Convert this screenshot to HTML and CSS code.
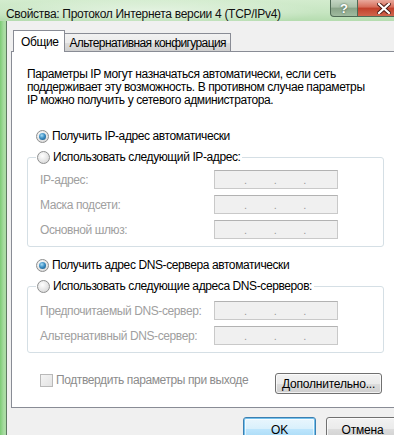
FILE: index.html
```html
<!DOCTYPE html>
<html lang="ru">
<head>
  <meta charset="UTF-8">
  <title>Свойства: Протокол Интернета версии 4 (TCP/IPv4)</title>
  <link rel="stylesheet" href="styles.css">
</head>
<body>
  <div class="window">
    <div class="titlebar">
      <span class="title">Свойства: Протокол Интернета версии 4 (TCP/IPv4)</span>
      <div class="caption-btns">
        <button class="cap-btn help">?</button>
        <button class="cap-btn close">
          <svg width="14" height="11" viewBox="0 0 14 11">
            <path d="M2 1 L12 10 M12 1 L2 10" stroke="#4a1a14" stroke-width="4" stroke-linecap="square"/>
            <path d="M2 1 L12 10 M12 1 L2 10" stroke="#ffffff" stroke-width="2.2" stroke-linecap="square"/>
          </svg>
        </button>
      </div>
    </div>

    <div class="frame">
      <div class="client">
        <div class="tabs">
          <div class="tab active">Общие</div>
          <div class="tab">Альтернативная конфигурация</div>
        </div>

        <div class="panel">
          <p class="intro">Параметры IP могут назначаться автоматически, если сеть<br>
            поддерживает эту возможность. В противном случае параметры<br>
            IP можно получить у сетевого администратора.</p>

          <label class="radio-row first">
            <span class="radio checked"></span>
            <span>Получить IP-адрес автоматически</span>
          </label>

          <fieldset class="group">
            <legend class="radio-row">
              <span class="radio"></span>
              <span>Использовать следующий IP-адрес:</span>
            </legend>
            <div class="field">
              <span class="field-label">IP-адрес:</span>
              <span class="ip-box"><i>.</i><i>.</i><i>.</i></span>
            </div>
            <div class="field">
              <span class="field-label">Маска подсети:</span>
              <span class="ip-box"><i>.</i><i>.</i><i>.</i></span>
            </div>
            <div class="field">
              <span class="field-label">Основной шлюз:</span>
              <span class="ip-box"><i>.</i><i>.</i><i>.</i></span>
            </div>
          </fieldset>

          <label class="radio-row second">
            <span class="radio checked"></span>
            <span>Получить адрес DNS-сервера автоматически</span>
          </label>

          <fieldset class="group dns">
            <legend class="radio-row">
              <span class="radio"></span>
              <span>Использовать следующие адреса DNS-серверов:</span>
            </legend>
            <div class="field">
              <span class="field-label">Предпочитаемый DNS-сервер:</span>
              <span class="ip-box"><i>.</i><i>.</i><i>.</i></span>
            </div>
            <div class="field">
              <span class="field-label">Альтернативный DNS-сервер:</span>
              <span class="ip-box"><i>.</i><i>.</i><i>.</i></span>
            </div>
          </fieldset>

          <div class="bottom-row">
            <label class="check-row">
              <span class="checkbox"></span>
              <span>Подтвердить параметры при выходе</span>
            </label>
            <button class="btn advanced">Дополнительно...</button>
          </div>
        </div>

        <div class="dialog-btns">
          <button class="btn default">OK</button>
          <button class="btn">Отмена</button>
        </div>
      </div>
    </div>
  </div>
</body>
</html>
```

FILE: styles.css
```css
/* Reset */
* {
  margin: 0;
  padding: 0;
  box-sizing: border-box;
}

body {
  width: 394px;
  height: 435px;
  overflow: hidden;
  font-family: "Liberation Sans", Arial, sans-serif;
  font-size: 12px;
  letter-spacing: -0.4px;
  color: #000;
  background: #8fd08a;
}

.window {
  width: 410px;
  height: 435px;
  display: flex;
  flex-direction: column;
  background: linear-gradient(90deg, #7ccb75 0, #a9dca3 4px, #c4e6bf 60%, #b2dcab 100%);
}

/* Title bar */
.titlebar {
  height: 25px;
  display: flex;
  align-items: flex-start;
  background:
    radial-gradient(ellipse 170px 14px at 150px 12px, rgba(255, 255, 255, 0.55), transparent),
    linear-gradient(180deg, #d3ecce 0, #c6e5c1 60%, #b5dcaf 100%);
}

.title {
  flex: 1;
  min-width: 0;
  overflow: hidden;
  white-space: nowrap;
  padding: 7px 0 0 6px;
  font-size: 12px;
  letter-spacing: -0.3px;
  color: #111;
}

.caption-btns {
  display: flex;
}

.cap-btn {
  height: 17px;
  border: 1px solid #4f6a55;
  border-top: none;
  font-family: "Liberation Sans", Arial, sans-serif;
  display: flex;
  align-items: center;
  justify-content: center;
}

.cap-btn.help {
  width: 28px;
  border-radius: 0 0 0 4px;
  background: linear-gradient(180deg, #c3d5c2 0, #a9c0a8 45%, #88a387 50%, #a0bb9f 100%);
  color: #fff;
  font-weight: bold;
  font-size: 13px;
  text-shadow: 0 0 2px #2f4a37;
}

.cap-btn.close {
  width: 52px;
  border-left: none;
  background: linear-gradient(180deg, #e9a99c 0, #d66b58 45%, #c13f2a 50%, #d0654c 100%);
}

/* Frame + client area */
.frame {
  flex: 1;
  padding-left: 6px;
}

.client {
  height: 100%;
  background: #f0f0f0;
  border-left: 1px solid #5d7a61;
  padding: 9px 0 0 4px;
}

/* Tabs */
.tabs {
  display: flex;
  align-items: flex-end;
  padding-left: 2px;
  height: 21px;
}

.tab {
  height: 18px;
  padding: 2px 4px 0 4px;
  border: 1px solid #898c95;
  border-bottom: none;
  border-left: none;
  background: linear-gradient(180deg, #f2f2f2 0, #ebebeb 50%, #dddddd 51%, #cfcfcf 100%);
  letter-spacing: -0.6px;
  color: #000;
}

.tab.active {
  height: 22px;
  margin-bottom: -1px;
  padding: 4px 6px 0 7px;
  border-left: 1px solid #898c95;
  background: #fff;
  letter-spacing: -0.4px;
  position: relative;
  z-index: 1;
}

/* Tab panel */
.panel {
  background: #fff;
  border: 1px solid #898c95;
  height: 357px;
  padding: 16px 0 0 15px;
  width: 420px;
}

.intro {
  line-height: 13px;
  white-space: nowrap;
}

.radio-row {
  display: flex;
  align-items: center;
  gap: 3px;
  height: 16px;
}

.radio-row.first {
  margin: 21px 0 0 9px;
}

.radio-row.second {
  margin: 10px 0 0 9px;
}

.radio {
  width: 13px;
  height: 13px;
  border-radius: 50%;
  border: 1px solid #8e8f8f;
  background: radial-gradient(circle at 40% 35%, #ffffff 0, #e3e3e3 60%, #cfcfcf 100%);
  display: flex;
  align-items: center;
  justify-content: center;
}

.radio.checked::after {
  content: "";
  width: 7px;
  height: 7px;
  border-radius: 50%;
  background: radial-gradient(circle at 40% 35%, #a7dcf5 0, #3d8fc4 45%, #0e4c7a 100%);
}

/* Group boxes */
.group {
  width: 357px;
  border: 1px solid #d5dfe5;
  border-radius: 3px;
  padding: 5px 0 7px 12px;
  margin-top: 5px;
}

.group legend {
  margin-left: -4px;
  padding: 0 2px 0 1px;
}

.field {
  display: flex;
  align-items: center;
  height: 19px;
  margin-bottom: 6px;
}

.field:last-child {
  margin-bottom: 0;
}

.field-label {
  width: 174px;
  color: #a0a0a0;
}

.ip-box {
  width: 124px;
  height: 19px;
  border: 1px solid #c9c9c9;
  border-top-color: #b2b2b2;
  background: #f0f0f0;
  display: flex;
  padding-left: 29px;
  gap: 27px;
  line-height: 19px;
  color: #9a9a9a;
}

.ip-box i {
  font-style: normal;
  font-size: 11px;
}

.group.dns {
  padding-top: 7px;
}

/* Bottom row of the panel */
.bottom-row {
  display: flex;
  align-items: flex-start;
  margin-top: 20px;
  width: 355px;
}

.check-row {
  display: flex;
  align-items: center;
  gap: 3px;
  margin-left: 13px;
  color: #8c8c8c;
}

.checkbox {
  width: 13px;
  height: 13px;
  border: 1px solid #b9b9b9;
  background: linear-gradient(135deg, #f4f4f4, #e3e3e3);
}

.btn {
  height: 21px;
  border: 1px solid #707070;
  border-radius: 3px;
  background: linear-gradient(180deg, #f2f2f2 0, #ebebeb 50%, #dddddd 51%, #cfcfcf 100%);
  font-family: "Liberation Sans", Arial, sans-serif;
  font-size: 12px;
  letter-spacing: -0.2px;
  color: #000;
  box-shadow: inset 0 0 0 1px rgba(255, 255, 255, 0.7);
}

.btn.advanced {
  margin-left: auto;
  width: 107px;
}

/* Dialog buttons */
.dialog-btns {
  display: flex;
  gap: 10px;
  padding: 9px 0 0 232px;
}

.dialog-btns .btn {
  width: 73px;
  height: 23px;
  padding-top: 2px;
}

.btn.default {
  border-color: #3c7fb1;
  box-shadow: inset 0 0 0 1px #74c1ec, inset 0 0 0 2px rgba(255, 255, 255, 0.6);
  background: linear-gradient(180deg, #eaf6fd 0, #d9f0fc 50%, #bee6fd 51%, #a7d9f5 100%);
}
```
